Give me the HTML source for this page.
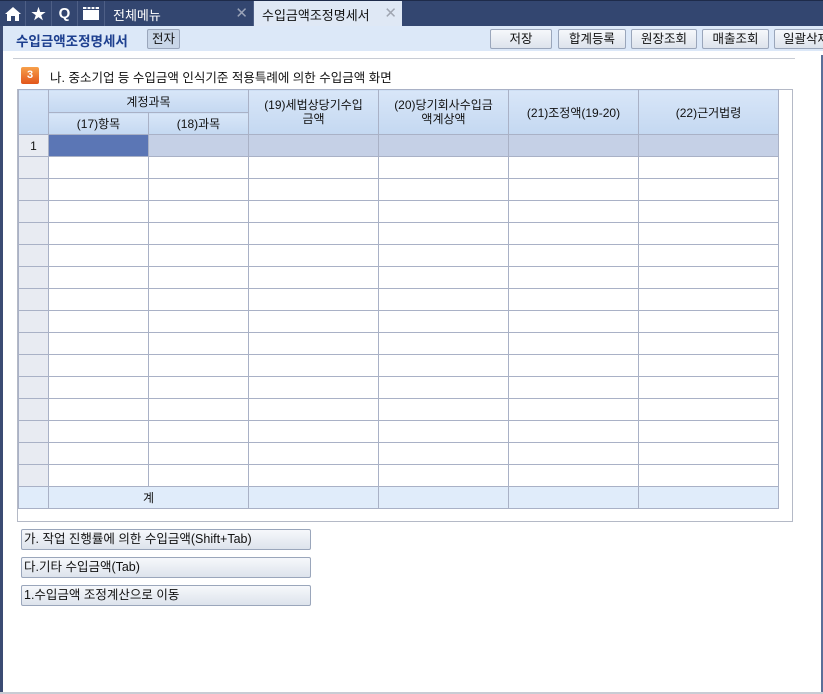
<!DOCTYPE html>
<html><head><meta charset="utf-8"><style>
*{margin:0;padding:0;box-sizing:border-box}
body{width:823px;height:694px;background:#fff;position:relative;overflow:hidden;font-family:"Liberation Sans","Noto Sans CJK KR","NanumGothic",sans-serif;font-size:12px;color:#111}
.abs{position:absolute}
.top{left:0;top:0;width:823px;height:26px;background:#334670;border-top:1px solid #1e2b4a}
.ic{top:1px;height:25px;width:26px;border-right:1px solid #4e5f86;color:#fff;display:flex;align-items:center;justify-content:center;font-weight:bold;font-size:15px}
.tab{top:1px;height:25px;color:#fff;font-size:13px;padding:4px 0 0 8px}
.x{position:absolute;right:5px;top:3px;color:#9aa3b8;font-size:15px}
.hdr{left:0;top:26px;width:823px;height:25px;background:#dce8f8}
.btn{top:29px;height:20px;border:1px solid #9aa6bb;border-radius:2px;background:linear-gradient(#f6f8fb,#dde3ec);text-align:center;font-size:12.5px;line-height:18px}
table{border-collapse:collapse;position:absolute;left:18px;top:89px;table-layout:fixed}
td{border:1px solid #a9b1c6;height:22px;text-align:center;font-size:12px;padding:0}
.h{background:linear-gradient(#d8e6f8,#c4d8f1)}
.rn{background:#e8ebf2}
.sb{top:529px;left:21px;width:290px;height:21px;border:1px solid #9aa6bb;border-radius:2px;background:linear-gradient(#f6f8fb,#dde3ec);font-size:12.5px;line-height:19px;padding-left:2px}
</style></head><body>
<div class="abs top"></div>
<div class="abs ic" style="left:0"><svg width="16" height="14" viewBox="0 0 16 14"><path d="M8 0L0 7h2v7h4V9h4v5h4V7h2z" fill="#fff"/></svg></div>
<div class="abs ic" style="left:26px">★</div>
<div class="abs ic" style="left:52px">Q</div>
<div class="abs ic" style="left:78px;width:27px"><svg width="16" height="13" viewBox="0 0 16 13"><rect x="0" y="3" width="16" height="10" fill="#fff"/><path d="M0 0h16v2H0z" fill="#fff"/><path d="M4 0v3M8 0v3M12 0v3" stroke="#334670" stroke-width="1.2"/></svg></div>
<div class="abs tab" style="left:105px;width:149px;border-right:1px solid #4e5f86">전체메뉴<span class="x">✕</span></div>
<div class="abs tab" style="left:254px;width:148px;background:#dfe8f5;color:#111">수입금액조정명세서<span class="x" style="color:#a0a6b2">✕</span></div>
<div class="abs hdr"></div>
<div class="abs" style="left:0;top:26px;width:3px;height:668px;background:#3b4b73"></div>
<div class="abs" style="left:821px;top:55px;width:2px;height:639px;background:#5a6f98"></div>
<div class="abs" style="left:16px;top:30px;font-weight:bold;color:#1d3f8f;font-size:13.5px">수입금액조정명세서</div>
<div class="abs btn" style="left:147px;width:33px;background:#c9d6e8">전자</div>
<div class="abs btn" style="left:490px;width:62px">저장</div>
<div class="abs btn" style="left:558px;width:68px">합계등록</div>
<div class="abs btn" style="left:631px;width:66px">원장조회</div>
<div class="abs btn" style="left:702px;width:67px">매출조회</div>
<div class="abs btn" style="left:774px;width:60px;text-align:left;padding-left:8px">일괄삭제</div>
<div class="abs" style="left:13px;top:58px;width:782px;height:1px;background:#c8ccd4"></div>
<div class="abs" style="left:21px;top:67px;width:18px;height:17px;border-radius:2px;background:linear-gradient(#f7a04a,#e2561b);color:#fff;font-weight:bold;font-size:11px;text-align:center;line-height:17px">3</div>
<div class="abs" style="left:50px;top:67px;font-size:12.5px">나. 중소기업 등 수입금액 인식기준 적용특례에 의한 수입금액 화면</div>
<div class="abs" style="left:17px;top:89px;width:776px;height:433px;border:1px solid #b4b9c6"></div>
<table>
<colgroup><col style="width:30px"><col style="width:100px"><col style="width:100px"><col style="width:130px"><col style="width:130px"><col style="width:130px"><col style="width:140px"></colgroup>
<tr style="height:23px"><td class="h" rowspan="2"></td><td class="h" colspan="2" style="height:23px">계정과목</td><td class="h" rowspan="2" style="line-height:14px">(19)세법상당기수입<br>금액</td><td class="h" rowspan="2" style="line-height:14px">(20)당기회사수입금<br>액계상액</td><td class="h" rowspan="2">(21)조정액(19-20)</td><td class="h" rowspan="2">(22)근거법령</td></tr>
<tr style="height:21px"><td class="h" style="height:21px">(17)항목</td><td class="h">(18)과목</td></tr>
<tr><td class="rn">1</td><td style="background:#5b76b5"></td><td style="background:#c5d0e6"></td><td style="background:#c5d0e6"></td><td style="background:#c5d0e6"></td><td style="background:#c5d0e6"></td><td style="background:#c5d0e6"></td></tr>
<tr><td class="rn"></td><td></td><td></td><td></td><td></td><td></td><td></td></tr>
<tr><td class="rn"></td><td></td><td></td><td></td><td></td><td></td><td></td></tr>
<tr><td class="rn"></td><td></td><td></td><td></td><td></td><td></td><td></td></tr>
<tr><td class="rn"></td><td></td><td></td><td></td><td></td><td></td><td></td></tr>
<tr><td class="rn"></td><td></td><td></td><td></td><td></td><td></td><td></td></tr>
<tr><td class="rn"></td><td></td><td></td><td></td><td></td><td></td><td></td></tr>
<tr><td class="rn"></td><td></td><td></td><td></td><td></td><td></td><td></td></tr>
<tr><td class="rn"></td><td></td><td></td><td></td><td></td><td></td><td></td></tr>
<tr><td class="rn"></td><td></td><td></td><td></td><td></td><td></td><td></td></tr>
<tr><td class="rn"></td><td></td><td></td><td></td><td></td><td></td><td></td></tr>
<tr><td class="rn"></td><td></td><td></td><td></td><td></td><td></td><td></td></tr>
<tr><td class="rn"></td><td></td><td></td><td></td><td></td><td></td><td></td></tr>
<tr><td class="rn"></td><td></td><td></td><td></td><td></td><td></td><td></td></tr>
<tr><td class="rn"></td><td></td><td></td><td></td><td></td><td></td><td></td></tr>
<tr><td class="rn"></td><td></td><td></td><td></td><td></td><td></td><td></td></tr>
<tr style="background:#e0ecfa"><td></td><td colspan="2">계</td><td></td><td></td><td></td><td></td></tr>
</table>
<div class="abs sb">가. 작업 진행률에 의한 수입금액(Shift+Tab)</div>
<div class="abs sb" style="top:557px">다.기타 수입금액(Tab)</div>
<div class="abs sb" style="top:585px">1.수입금액 조정계산으로 이동</div>
<div class="abs" style="left:0;top:692px;width:823px;height:2px;background:#c8ccd4"></div>
</body></html>
